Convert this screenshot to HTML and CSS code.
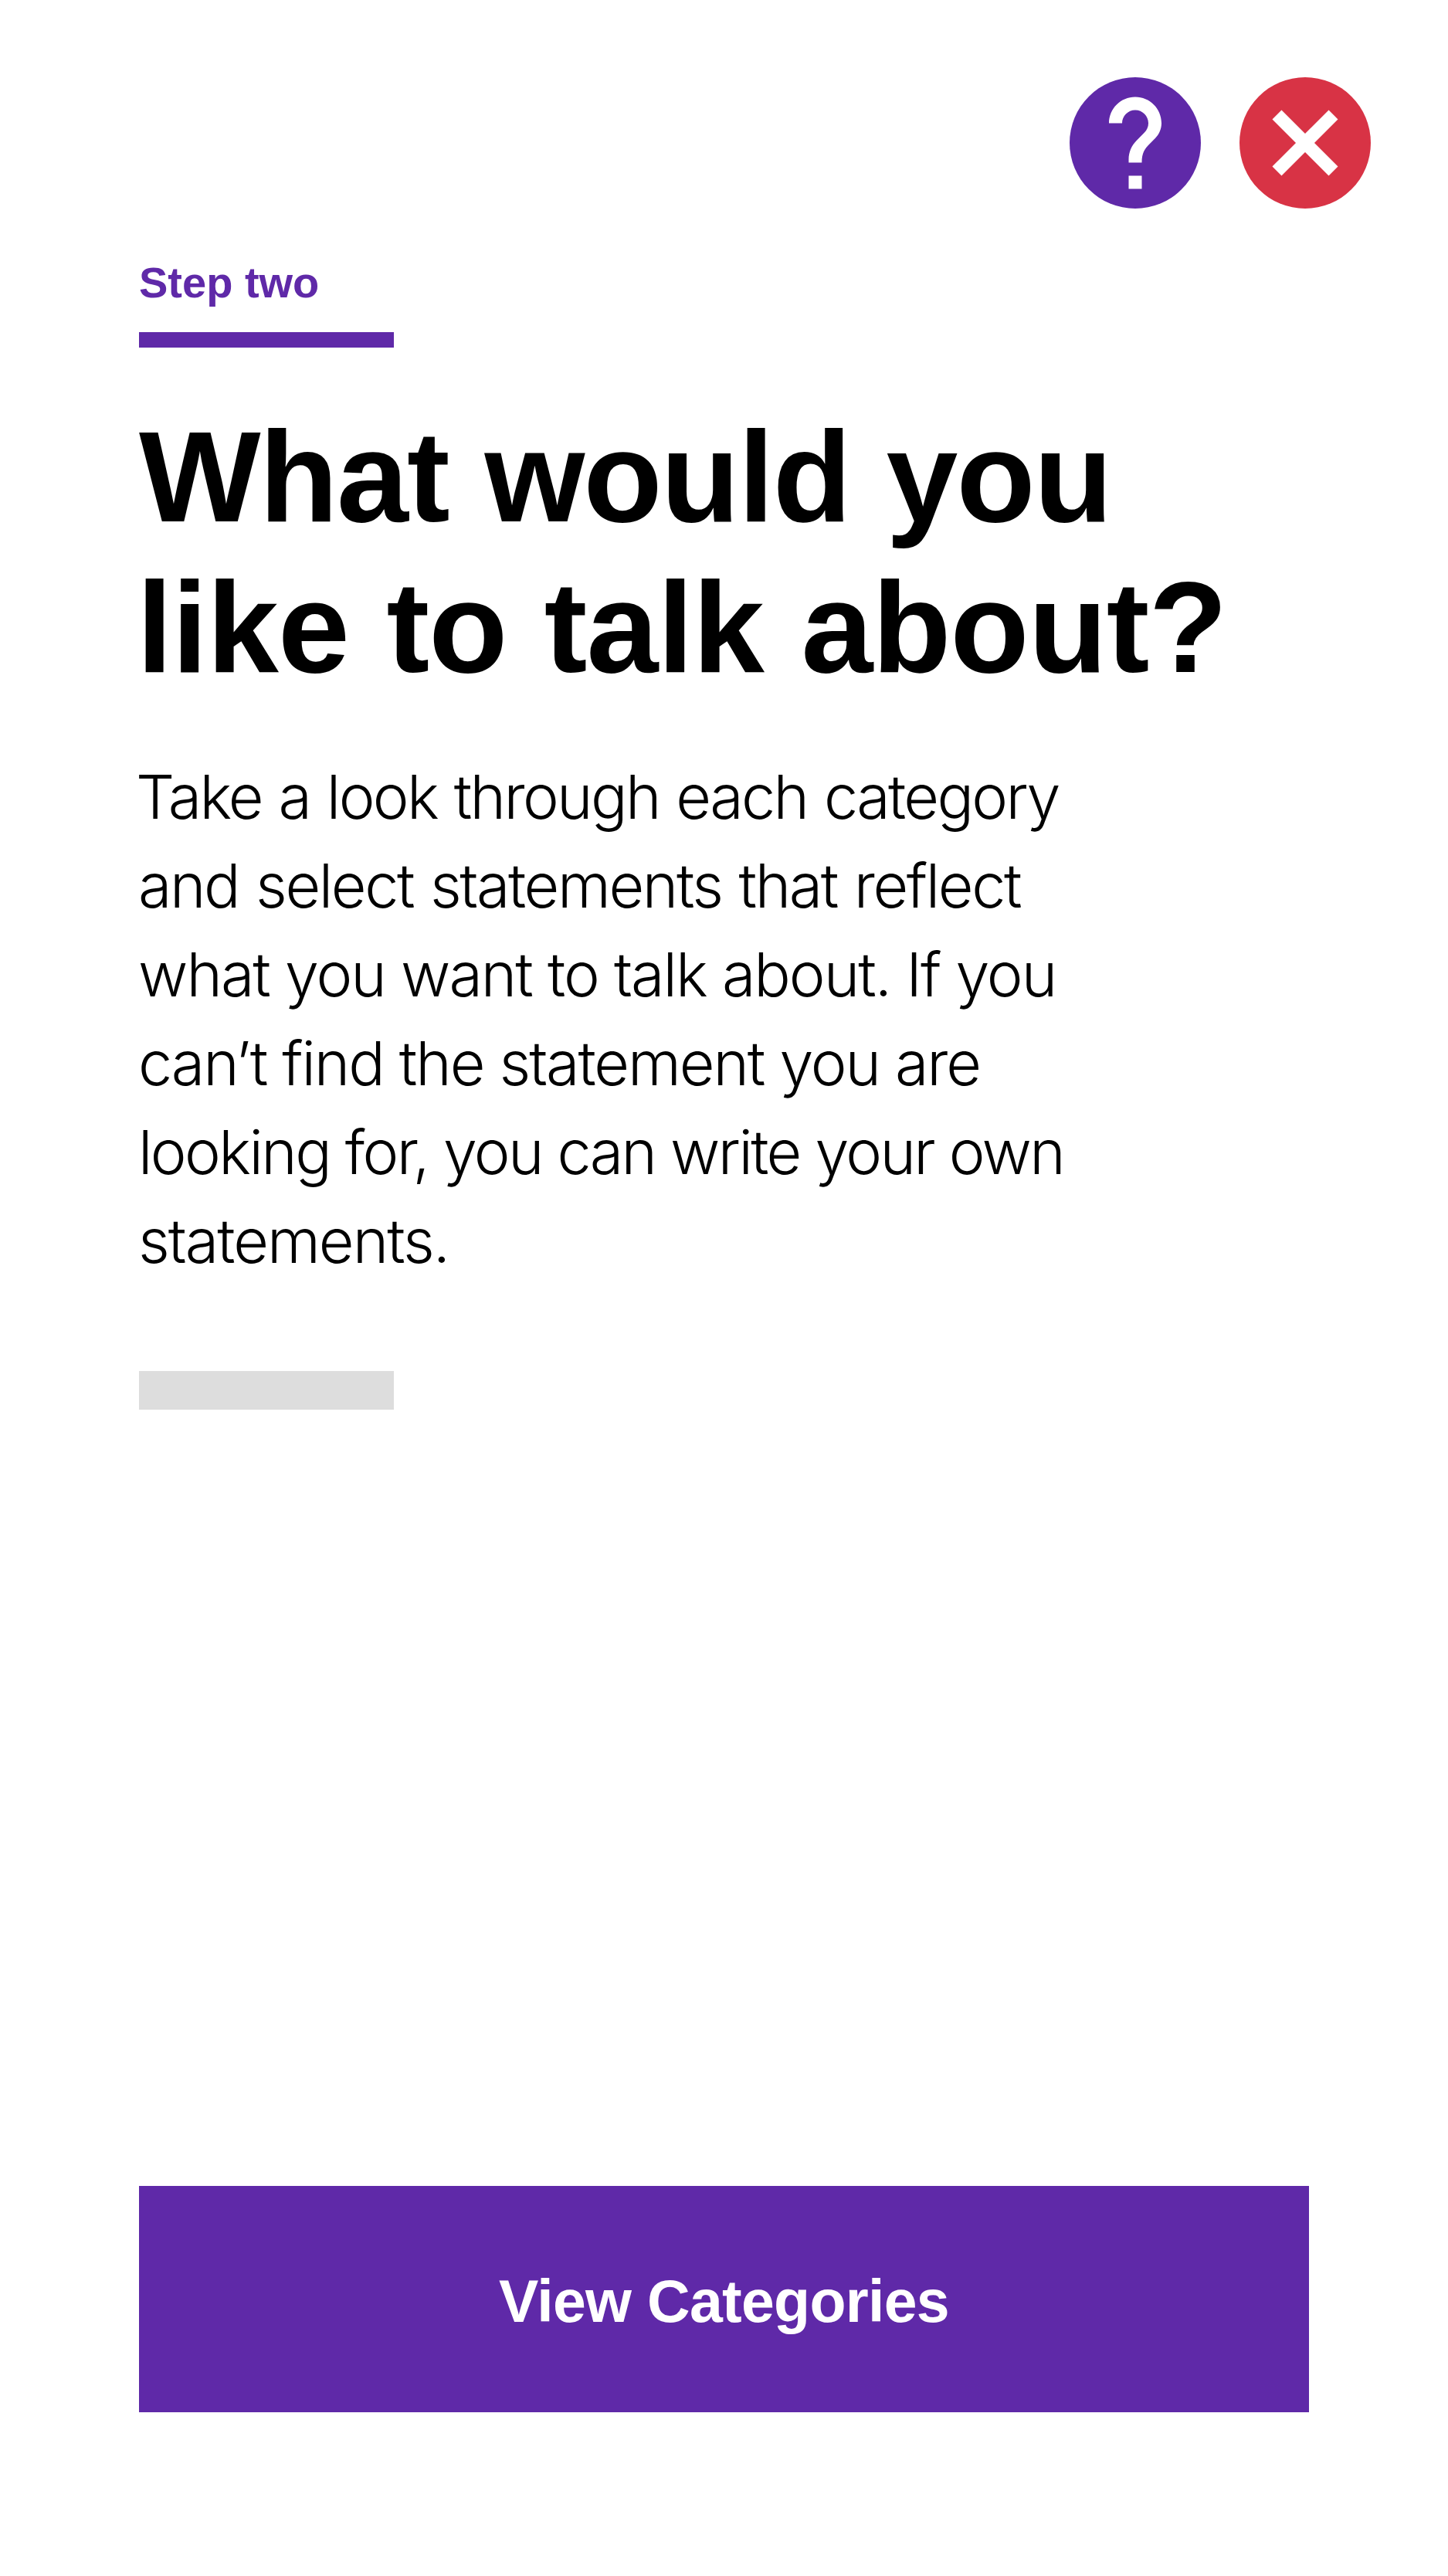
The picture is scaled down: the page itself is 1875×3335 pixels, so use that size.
FILE: index.html
```html
<!DOCTYPE html>
<html lang="en">
<head>
<meta charset="utf-8">
<title>What would you like to talk about?</title>
<link rel="stylesheet" href="styles.css">
</head>
<body>
<main class="screen">
  <nav class="actions">
    <button class="icon-button" aria-label="Help">
      <svg viewBox="2 2 20 20"><circle cx="12" cy="12" r="10" fill="#5f29a8"/><path fill="#fff" d="M11 17h2v2h-2zM15.07 11.25l-.9.92C13.45 12.9 13 13.5 13 15h-2v-.5c0-1.1.45-2.1 1.17-2.83l1.24-1.26c.37-.36.59-.86.59-1.41 0-1.1-.9-2-2-2s-2 .9-2 2H8c0-2.21 1.79-4 4-4s4 1.79 4 4c0 .88-.36 1.68-.93 2.25z"/></svg>
    </button>
    <button class="icon-button" aria-label="Close">
      <svg viewBox="2 2 20 20"><circle cx="12" cy="12" r="10" fill="#d83345"/><path fill="#fff" d="M17 15.59L15.59 17 12 13.41 8.41 17 7 15.59 10.59 12 7 8.41 8.41 7 12 10.59 15.59 7 17 8.41 13.41 12z"/></svg>
    </button>
  </nav>
  <p class="step">Step two</p>
  <h1 class="title"><span class="line t1">What would you</span><span class="line t2">like to talk about?</span></h1>
  <p class="intro"><span class="line i1">Take a look through each category</span><span class="line i2">and select statements that reflect</span><span class="line i3">what you want to talk about. If you</span><span class="line i4">can’t find the statement you are</span><span class="line i5">looking for, you can write your own</span><span class="line i6">statements.</span></p>
  <div class="divider"></div>
  <button class="primary">View Categories</button>
</main>
</body>
</html>
```
FILE: styles.css
```css
* { box-sizing: border-box; }
body { margin: 0; background: #fff; color: #000; font-family: "Liberation Sans", Arial, sans-serif; }
.screen { display: flex; flex-direction: column; height: 3335px; padding: 100px 180px 212px; }
.actions { display: flex; justify-content: flex-end; gap: 50px; height: 170px; margin-right: -80px; }
.icon-button { width: 170px; height: 170px; padding: 0; border: 0; background: none; }
.icon-button svg { display: block; width: 170px; height: 170px; }
.step { width: 330px; height: 120px; margin: 60px 0 0; padding-top: 4px; border-bottom: 20px solid #5f29a8; color: #5f29a8; font-size: 56px; font-weight: 700; line-height: 64px; }
.title { margin: 70px 0 0; font-size: 167px; font-weight: 700; line-height: 195px; }
.line { display: block; width: max-content; white-space: nowrap; }
.t1 { letter-spacing: -1.8px; word-spacing: 2px; }
.t2 { margin-left: -3px; letter-spacing: -0.9px; word-spacing: 3px; }
.intro { margin: 64px 0 0; font-family: Inter, sans-serif; font-size: 79px; font-weight: 300; line-height: 115px; }
.i1 { margin-left: -4px; letter-spacing: -2.65px; word-spacing: 2px; }
.i2, .i3, .i4, .i5, .i6 { margin-left: -1px; }
.i2 { letter-spacing: -2.4px; word-spacing: 2px; }
.i3 { letter-spacing: -2px; }
.i4 { letter-spacing: -2.1px; }
.i5 { letter-spacing: -2.6px; }
.i6 { letter-spacing: -2px; }
.divider { width: 330px; height: 50px; margin-top: 111px; background: #ddd; }
.primary { width: 1515px; height: 293px; margin-top: auto; padding: 4px 0 0; border: 0; background: #5f29a8; color: #fff; font: 700 77px/90px "Liberation Sans", Arial, sans-serif; letter-spacing: -0.7px; }
```
